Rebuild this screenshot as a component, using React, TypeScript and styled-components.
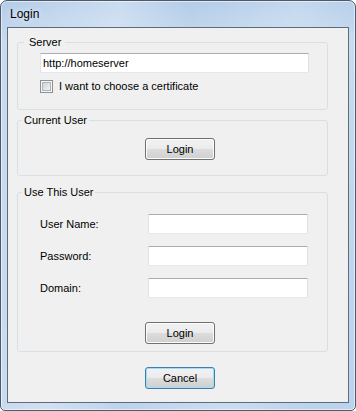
import styled, { createGlobalStyle } from "styled-components";

const GlobalStyle = createGlobalStyle`
  body {
    margin: 0;
    background: #ffffff;
    font-family: "Liberation Sans", Arial, sans-serif;
  }
`;

const Window = styled.div`
  width: 356px;
  height: 411px;
  box-sizing: border-box;
  display: flex;
  flex-direction: column;
  border: 1px solid #4d5a69;
  border-radius: 7px 7px 5px 5px;
  overflow: hidden;
  background: linear-gradient(
      100deg,
      rgba(255, 255, 255, 0) 0%,
      rgba(255, 255, 255, 0.3) 28%,
      rgba(255, 255, 255, 0) 45%,
      rgba(255, 255, 255, 0.22) 70%,
      rgba(255, 255, 255, 0) 88%
    ),
    linear-gradient(180deg, #b3cce8 0%, #c6daef 10%, #bdd3ec 100%);
  box-shadow: inset 0 0 0 1px rgba(255, 255, 255, 0.55);
`;

const TitleBar = styled.div`
  height: 26px;
  box-sizing: border-box;
  padding: 6px 0 0 9px;
  font-size: 12px;
  line-height: 15px;
  color: #000;
  text-shadow: 0 0 6px rgba(255, 255, 255, 0.9);
`;

const Client = styled.div`
  height: 376px;
  margin: 0 6px 7px;
  box-sizing: border-box;
  display: flex;
  flex-direction: column;
  align-items: flex-start;
  padding: 8px 0 0 9px;
  border: 1px solid #5d6b7b;
  background: #f0f0f0;
  font-size: 11px;
  line-height: 13px;
  color: #000;
`;

const Group = styled.fieldset<{ $gap?: number }>`
  width: 311px;
  box-sizing: border-box;
  min-inline-size: 0;
  margin: ${({ $gap }) => $gap ?? 0}px 0 0;
  padding: 0;
  border: 1px solid #d5dfe5;
  border-radius: 3px;
`;

const Legend = styled.legend<{ $inset: number; $pad: string }>`
  margin-left: ${({ $inset }) => $inset}px;
  padding: ${({ $pad }) => $pad};
  height: 13px;
  font-size: 11px;
  line-height: 13px;
  color: #000;
`;

const ServerBody = styled.div`
  display: flex;
  flex-direction: column;
  gap: 7px;
  padding: 4px 18px 16px 22px;
`;

const TextBox = styled.input<{ $width: number }>`
  width: ${({ $width }) => $width}px;
  height: 20px;
  box-sizing: border-box;
  margin: 0;
  padding: 0 2px;
  border: 1px solid;
  border-color: #abadb3 #dbdfe6 #e3e9ef #e2e3ea;
  border-radius: 1px;
  background: #fff;
  font-family: "Liberation Sans", Arial, sans-serif;
  font-size: 11px;
  color: #000;
  outline: none;
`;

const CheckRow = styled.label`
  display: flex;
  align-items: center;
  gap: 6px;
  height: 13px;
`;

const CheckBox = styled.span`
  width: 13px;
  height: 13px;
  box-sizing: border-box;
  border: 1px solid #8e8f8f;
  background: linear-gradient(135deg, #c6cbd2 0%, #e3e5e8 55%, #f7f7f7 100%);
  box-shadow: inset 0 0 0 1px #f6f6f6, inset 0 0 0 2px #aeb3b9;
`;

const CurrentBody = styled.div`
  padding: 11px 0 15px 127px;
`;

const UserBody = styled.div`
  display: flex;
  flex-direction: column;
  gap: 12px;
  padding: 15px 0 7px 22px;
`;

const FieldRow = styled.div`
  display: flex;
  align-items: center;
  height: 20px;
`;

const FieldLabel = styled.span`
  width: 108px;
`;

const ButtonSlot = styled.div<{ $left: number; $top?: number }>`
  padding-left: ${({ $left }) => $left}px;
  margin-top: ${({ $top }) => $top ?? 0}px;
`;

const Button = styled.button<{ $default?: boolean }>`
  width: 70px;
  height: 22px;
  box-sizing: border-box;
  margin: 0;
  padding: 0;
  border: 1px solid ${({ $default }) => ($default ? "#3c7fb1" : "#707070")};
  border-radius: 3px;
  background: linear-gradient(
    180deg,
    #f2f2f2 0%,
    #ebebeb 50%,
    #dddddd 50%,
    #cfcfcf 100%
  );
  box-shadow: inset 0 0 0 1px
    ${({ $default }) => ($default ? "#a4dcf8" : "#fcfcfc")};
  font-family: "Liberation Sans", Arial, sans-serif;
  font-size: 11px;
  line-height: 13px;
  color: #000;
`;

const fields = ["User Name:", "Password:", "Domain:"];

export default function App() {
  return (
    <>
      <GlobalStyle />
      <Window>
        <TitleBar>Login</TitleBar>
        <Client>
          <Group>
            <Legend $inset={6} $pad="0 4px 0 5px">
              Server
            </Legend>
            <ServerBody>
              <TextBox $width={269} defaultValue="http://homeserver" />
              <CheckRow>
                <CheckBox />
                I want to choose a certificate
              </CheckRow>
            </ServerBody>
          </Group>

          <Group $gap={4}>
            <Legend $inset={4} $pad="0 2px">
              Current User
            </Legend>
            <CurrentBody>
              <Button>Login</Button>
            </CurrentBody>
          </Group>

          <Group $gap={10}>
            <Legend $inset={4} $pad="0 2px">
              Use This User
            </Legend>
            <UserBody>
              {fields.map((f) => (
                <FieldRow key={f}>
                  <FieldLabel>{f}</FieldLabel>
                  <TextBox
                    $width={160}
                    type={f === "Password:" ? "password" : "text"}
                  />
                </FieldRow>
              ))}
              <ButtonSlot $left={105} $top={12}>
                <Button>Login</Button>
              </ButtonSlot>
            </UserBody>
          </Group>

          <ButtonSlot $left={128} $top={15}>
            <Button $default>Cancel</Button>
          </ButtonSlot>
        </Client>
      </Window>
    </>
  );
}
